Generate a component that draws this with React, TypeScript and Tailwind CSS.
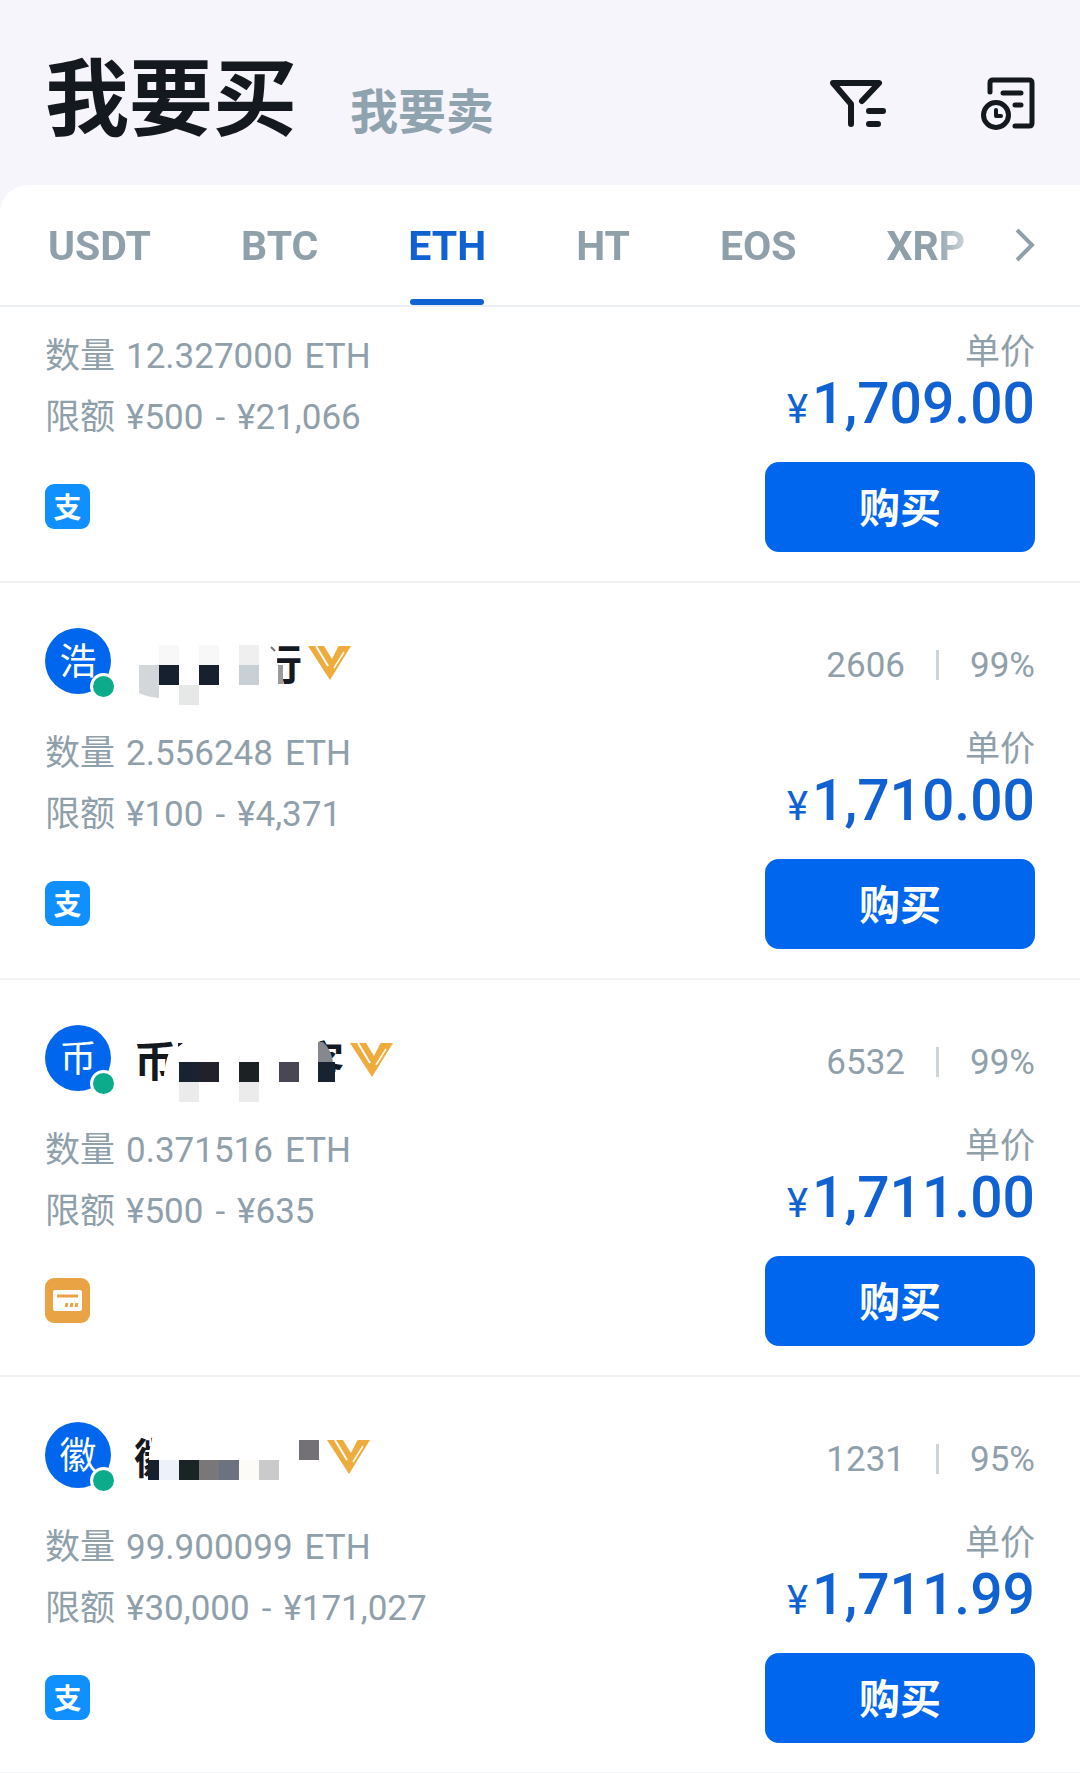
import { useState } from "react";
import type { ReactNode } from "react";

type Payment = "alipay" | "card";

interface Seller {
    initial: string;
    name: ReactNode;
    orders: string;
    rate: string;
}

interface Offer {
    seller?: Seller;
    amount: string;
    min: string;
    max: string;
    price: string;
    payment: Payment;
}

const COINS = ["USDT", "BTC", "ETH", "HT", "EOS", "XRP"];

/* Seller names are partly pixelated; each mosaic is laid over the real text. */

function NameHao() {
    return (
        <div className="relative flex h-[66px] w-[168px] items-center justify-end pt-[10px]">
            <span>行</span>
            <svg className="absolute inset-0 overflow-visible" width="168" height="66">
                <rect x="120" y="8" width="23" height="56" fill="#fff" />
                <path d="M137 19l4 4" stroke="#777" strokeWidth="2" />
                <rect x="144" y="37" width="5" height="19" fill="#9a9b9d" />
                <path d="M5 37h20v33q-12-1-20-5z" fill="#d4d7da" />
                <rect x="25" y="17" width="20" height="20" fill="#f8f8f8" />
                <rect x="25" y="37" width="20" height="20" fill="#17202e" />
                <rect x="65" y="17" width="20" height="20" fill="#f8f8f8" />
                <rect x="65" y="37" width="20" height="20" fill="#17202e" />
                <rect x="45" y="57" width="20" height="20" fill="#e5e8e6" />
                <rect x="105" y="17" width="20" height="20" fill="#efefef" />
                <rect x="105" y="37" width="20" height="20" fill="#c9d0d5" />
            </svg>
        </div>
    );
}

function NameBi() {
    return (
        <div className="relative flex h-[66px] w-[210px] items-center justify-between pt-[10px]">
            <span>币</span>
            <span>客</span>
            <svg className="absolute inset-0 overflow-visible" width="210" height="66">
                <path d="M38 22Q30 34 29 64H44V22z" fill="#fff" />
                <path d="M44 18h5l-5 4z" fill="#17202e" />
                <path d="M164 8h20v29h16v10h12v19h-48z" fill="#fff" />
                <rect x="45" y="37" width="20" height="20" fill="#182230" />
                <rect x="65" y="37" width="20" height="20" fill="#20212b" />
                <rect x="105" y="37" width="20" height="20" fill="#1a2224" />
                <rect x="145" y="37" width="20" height="20" fill="#4a4755" />
                <path d="M184 17h5q8 7 10 20h-15z" fill="#868890" />
                <rect x="184" y="37" width="17" height="20" fill="#182230" />
                <rect x="45" y="57" width="20" height="20" fill="#ebebeb" />
                <rect x="105" y="57" width="20" height="20" fill="#ebebeb" />
            </svg>
        </div>
    );
}

function NameHui() {
    return (
        <div className="relative flex h-[66px] w-[187px] items-center pt-[10px]">
            <span>徽</span>
            <svg className="absolute inset-0 overflow-visible" width="187" height="66">
                <path d="M20 8L15 30V38H25V58H0V66H46V8z" fill="#fff" />
                <rect x="14" y="38" width="11" height="20" fill="#17202e" />
                <rect x="25" y="38" width="20" height="20" fill="#ecf1fa" />
                <rect x="45" y="38" width="20" height="20" fill="#1a2426" />
                <rect x="65" y="38" width="20" height="20" fill="#7a7778" />
                <rect x="85" y="38" width="20" height="20" fill="#6d7280" />
                <rect x="105" y="38" width="20" height="20" fill="#fdfbf8" />
                <rect x="125" y="38" width="20" height="20" fill="#cacaca" />
                <rect x="165" y="18" width="20" height="20" fill="#747176" />
            </svg>
        </div>
    );
}

const OFFERS: Offer[] = [
    {
        amount: "12.327000",
        min: "¥500",
        max: "¥21,066",
        price: "1,709.00",
        payment: "alipay",
    },
    {
        seller: { initial: "浩", name: <NameHao />, orders: "2606", rate: "99%" },
        amount: "2.556248",
        min: "¥100",
        max: "¥4,371",
        price: "1,710.00",
        payment: "alipay",
    },
    {
        seller: { initial: "币", name: <NameBi />, orders: "6532", rate: "99%" },
        amount: "0.371516",
        min: "¥500",
        max: "¥635",
        price: "1,711.00",
        payment: "card",
    },
    {
        seller: { initial: "徽", name: <NameHui />, orders: "1231", rate: "95%" },
        amount: "99.900099",
        min: "¥30,000",
        max: "¥171,027",
        price: "1,711.99",
        payment: "alipay",
    },
];

function FilterIcon() {
    return (
        <svg
            width="56"
            height="49"
            viewBox="0 0 56 49"
            fill="none"
            stroke="currentColor"
            strokeWidth="6"
            strokeLinecap="round"
            strokeLinejoin="round"
        >
            <path d="M32 22L49 4H3L21 25V45" />
            <path d="M39 32H53M39 45H48" />
        </svg>
    );
}

function RecordsIcon() {
    return (
        <svg
            width="54"
            height="54"
            viewBox="0 0 54 54"
            fill="none"
            stroke="currentColor"
            strokeWidth="5"
            strokeLinecap="round"
            strokeLinejoin="round"
        >
            <path d="M9 15V6q0-3 3-3H48q3 0 3 3V46q0 3-3 3H34" />
            <path d="M22 16H40M34 28H40" />
            <circle cx="15" cy="38" r="12.5" />
            <path d="M15 33V39H20" strokeWidth="4" />
        </svg>
    );
}

function VipIcon() {
    return (
        <svg width="43" height="34" viewBox="0 0 43 34">
            <path d="M0 0H16L24 13L30 1Q30 0 32 0H43L22 34z" fill="#efab3c" />
            <path d="M8 0L20 20" stroke="#fff" strokeWidth="2" />
            <path d="M36 6L26 22" stroke="#fff" strokeWidth="1.5" />
        </svg>
    );
}

function PaymentIcon({ type }: { type: Payment }) {
    if (type === "card") {
        return (
            <svg width="45" height="45" viewBox="0 0 45 45" role="img" aria-label="银行卡">
                <rect width="45" height="45" rx="9" fill="#eaa344" />
                <rect x="8" y="12" width="29" height="21" rx="2" fill="#fff" />
                <path d="M12 18H33" stroke="#eaa344" strokeWidth="3" />
                <path d="M21 29l1-4M26 29l1-4M31 29l1-4" stroke="#eaa344" strokeWidth="3" />
            </svg>
        );
    }
    return (
        <span className="flex h-[45px] w-[45px] items-center justify-center rounded-[9px] bg-[#1090ff] pt-[4px] text-[28px] leading-none font-bold text-white">
            支
        </span>
    );
}

function SellerHead({ seller }: { seller: Seller }) {
    return (
        <div className="mb-[29px] flex items-center">
            <div className="relative flex h-[66px] w-[66px] items-center justify-center rounded-full bg-[#0066ed] pt-[2px] text-[37px] leading-none text-white">
                {seller.initial}
                <span className="absolute -right-[6px] -bottom-[6px] h-[27px] w-[27px] rounded-full border-3 border-white bg-[#0cab8c]" />
            </div>
            <div className="ml-[23px] text-[42px] leading-none font-bold text-[#14181f]">
                {seller.name}
            </div>
            <div className="ml-[6px] pt-[4px]">
                <VipIcon />
            </div>
            <div className="ml-auto flex items-center pt-[8px] text-[35px] leading-none">
                <span>{seller.orders}</span>
                <span className="mx-[31px] h-[30px] w-[3px] bg-[#ccd5db]" />
                <span>{seller.rate}</span>
            </div>
        </div>
    );
}

function OfferRow({ offer }: { offer: Offer }) {
    return (
        <li
            className={`border-b-2 border-[#f0f1f2] px-[45px] pb-[29px] ${
                offer.seller ? "pt-[45px]" : "pt-[19px]"
            }`}
        >
            {offer.seller && <SellerHead seller={offer.seller} />}
            <div className="flex justify-between">
                <div className="text-[35px] leading-[61px]">
                    <p>
                        <span className="mr-[11px]">数量</span>
                        {offer.amount}
                        <span className="ml-[12px]">ETH</span>
                    </p>
                    <p>
                        <span className="mr-[11px]">限额</span>
                        {offer.min}
                        <span className="mx-[12px]">-</span>
                        {offer.max}
                    </p>
                    <div className="mt-[36px]">
                        <PaymentIcon type={offer.payment} />
                    </div>
                </div>
                <div className="flex flex-col items-end pt-[5px]">
                    <span className="text-[35px] leading-[44px]">单价</span>
                    <p className="text-[57px] leading-[58px] font-medium text-[#1062d2]">
                        <span className="mr-[4px] text-[40px] leading-none font-normal">¥</span>
                        {offer.price}
                    </p>
                    <button
                        type="button"
                        className="mt-[29px] h-[90px] w-[270px] rounded-[14px] bg-[#0066ed] pt-[4px] text-[41px] leading-none font-bold text-white"
                    >
                        购买
                    </button>
                </div>
            </div>
        </li>
    );
}

export default function App() {
    const [coin, setCoin] = useState("ETH");

    return (
        <div className="bg-[#f6f5fb] font-[Roboto,'Noto_Sans_CJK_SC',sans-serif] text-[#8fa0ab]">
            <header className="flex h-[185px] items-center px-[45px] text-[#14181f]">
                <div className="flex items-baseline gap-[53px] pt-[16px] font-bold">
                    <h1 className="text-[84px] leading-none">我要买</h1>
                    <button type="button" className="text-[48px] leading-none text-[#8fa3ae]">
                        我要卖
                    </button>
                </div>
                <div className="ml-auto flex items-center gap-[95px] pt-[22px]">
                    <button type="button" aria-label="筛选">
                        <FilterIcon />
                    </button>
                    <button type="button" aria-label="订单记录">
                        <RecordsIcon />
                    </button>
                </div>
            </header>

            <main className="rounded-tl-[28px] bg-white">
                <nav className="flex h-[122px] border-b-2 border-[#eceff1] px-[45px]">
                    <div className="flex flex-1 gap-[90px] pl-[3px] [mask-image:linear-gradient(to_right,black_890px,transparent_945px)]">
                        {COINS.map((c) => (
                            <button
                                key={c}
                                type="button"
                                onClick={() => setCoin(c)}
                                className={`relative pt-[2px] text-[41px] leading-none font-bold ${
                                    c === coin ? "text-[#1062d2]" : ""
                                }`}
                            >
                                {c}
                                {c === coin && (
                                    <span className="absolute inset-x-[2px] bottom-0 h-[6px] rounded-full bg-[#1062d2]" />
                                )}
                            </button>
                        ))}
                    </div>
                    <button type="button" aria-label="更多">
                        <svg
                            width="20"
                            height="36"
                            viewBox="0 0 20 36"
                            fill="none"
                            stroke="currentColor"
                            strokeWidth="4"
                        >
                            <path d="M2 3L17 18L2 33" />
                        </svg>
                    </button>
                </nav>

                <ul>
                    {OFFERS.map((offer) => (
                        <OfferRow key={offer.price} offer={offer} />
                    ))}
                </ul>
            </main>
        </div>
    );
}
